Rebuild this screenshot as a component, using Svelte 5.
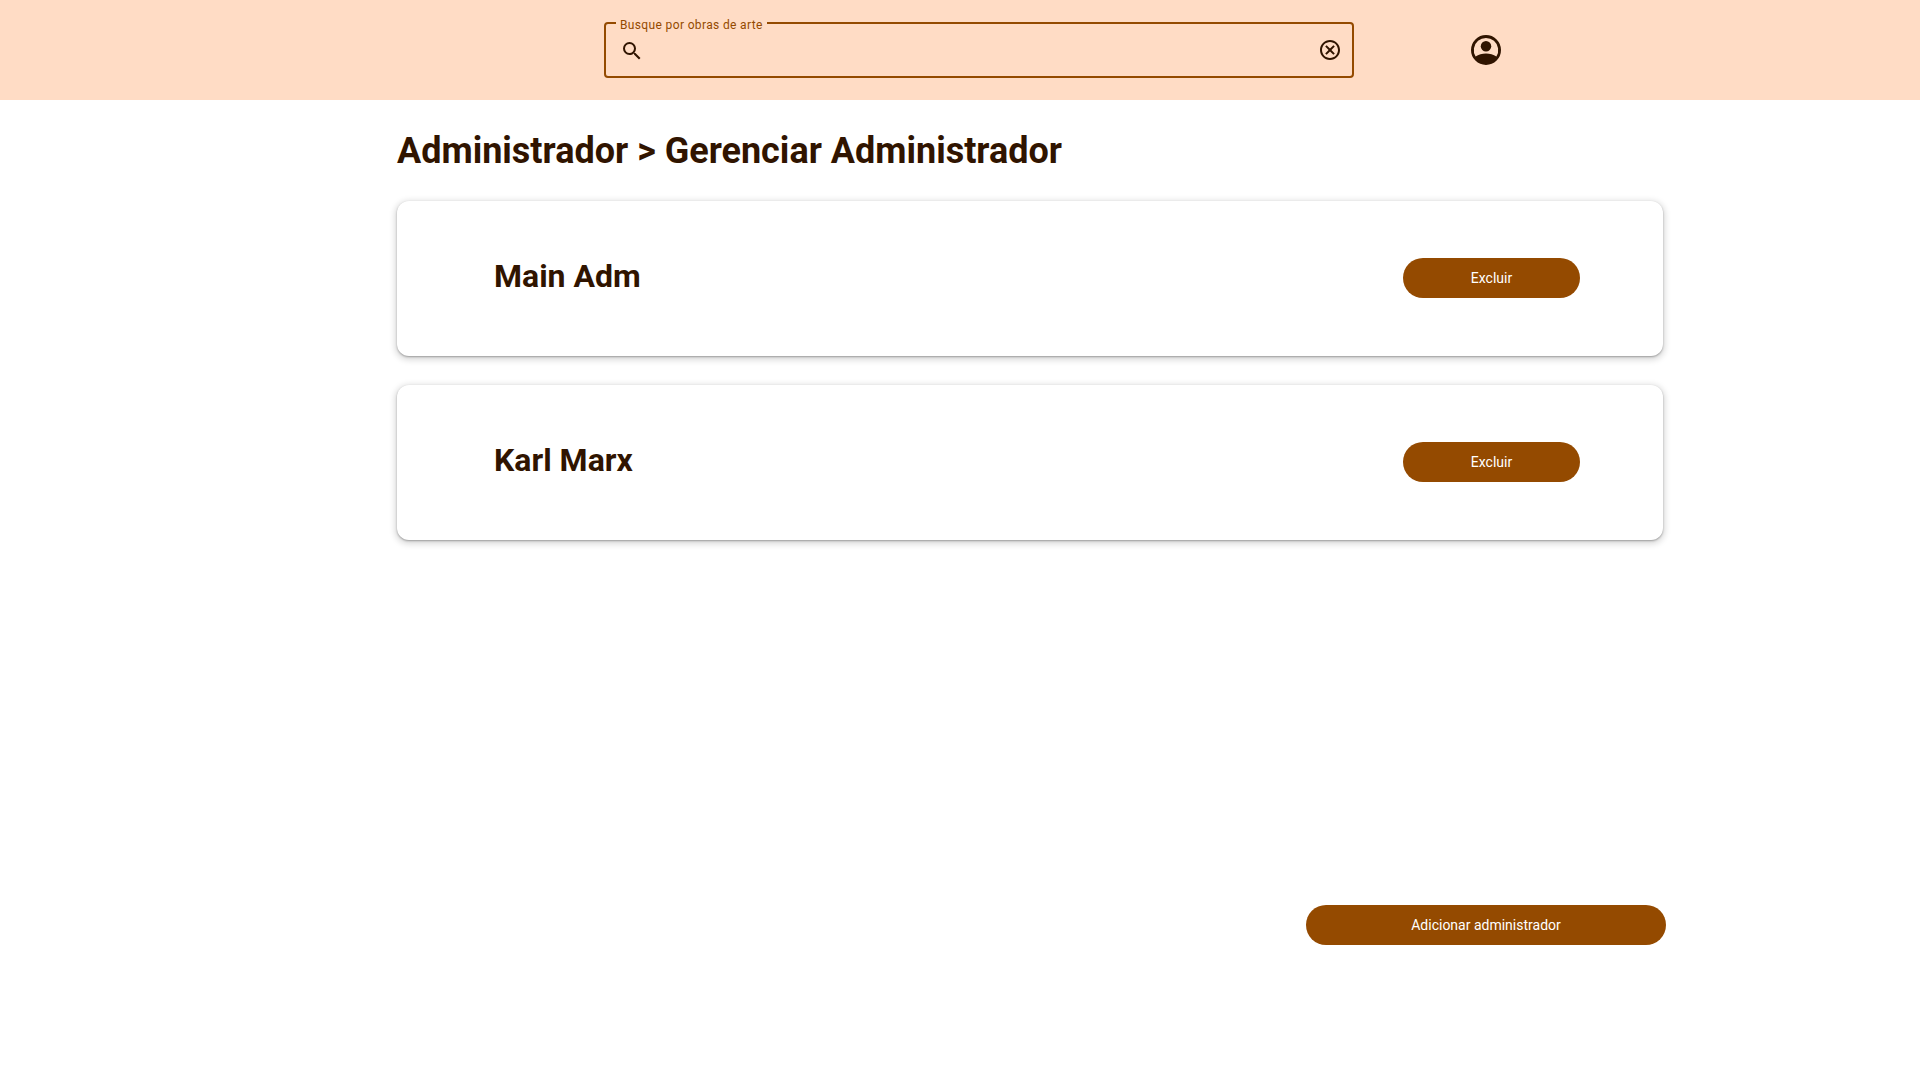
<script>
  let query = $state('');
  let admins = $state([
    { id: 1, name: 'Main Adm' },
    { id: 2, name: 'Karl Marx' }
  ]);

  function remove(id) {
    admins = admins.filter((admin) => admin.id !== id);
  }
</script>

<div class="page">
  <header class="topbar">
    <form class="search" role="search" onsubmit={(e) => e.preventDefault()}>
      <fieldset class="field">
        <legend><label for="query">Busque por obras de arte</label></legend>
        <div class="row">
          <svg class="icon" viewBox="0 -1 24 24" aria-hidden="true">
            <path d="M15.5 14h-.79l-.28-.27A6.47 6.47 0 0 0 16 9.5 6.5 6.5 0 1 0 9.5 16c1.61 0 3.09-.59 4.23-1.57l.27.28v.79l5 4.99L20.49 19l-4.99-5zm-6 0C7.01 14 5 11.99 5 9.5S7.01 5 9.5 5 14 7.01 14 9.5 11.99 14 9.5 14z" />
          </svg>
          <input id="query" type="text" bind:value={query} />
          <button class="plain" type="button" aria-label="Limpar busca" onclick={() => (query = '')}>
            <svg class="icon" viewBox="0 0 24 24" aria-hidden="true">
              <path d="M15.4 7.2 12 10.59 8.6 7.2 7.2 8.6 10.59 12 7.2 15.4 8.6 16.8 12 13.41 15.4 16.8 16.8 15.4 13.41 12 16.8 8.6zM12 2C6.47 2 2 6.47 2 12s4.47 10 10 10 10-4.47 10-10S17.53 2 12 2zm0 18c-4.41 0-8-3.59-8-8s3.59-8 8-8 8 3.59 8 8-3.59 8-8 8z" />
            </svg>
          </button>
        </div>
      </fieldset>
    </form>
    <button class="plain" type="button" aria-label="Minha conta">
      <svg class="account" viewBox="0 0 36 36" aria-hidden="true">
        <path fill-rule="evenodd" d="M18 3a15 15 0 1 0 0 30 15 15 0 0 0 0-30zM7.6 24.5A12.2 12.2 0 1 1 28.4 24.5C25.5 22.6 21.8 21.6 18 21.6S10.5 22.6 7.6 24.5z" />
        <circle cx="18" cy="14.2" r="5.25" />
      </svg>
    </button>
  </header>

  <main>
    <h1>Administrador &gt; Gerenciar Administrador</h1>
    <ul class="cards">
      {#each admins as admin (admin.id)}
        <li class="card">
          <h2>{admin.name}</h2>
          <button class="pill" type="button" onclick={() => remove(admin.id)}>Excluir</button>
        </li>
      {/each}
    </ul>
    <div class="actions">
      <button class="pill wide" type="button">Adicionar administrador</button>
    </div>
  </main>
</div>

<style>
  :global(body) {
    margin: 0;
    background: #fff;
  }

  .page {
    min-height: 100vh;
    display: flex;
    flex-direction: column;
    font-family: Roboto, 'Liberation Sans', sans-serif;
    color: #301400;
  }

  .topbar {
    box-sizing: border-box;
    min-height: 100px;
    padding: 0 416px 0 604px;
    display: flex;
    align-items: center;
    justify-content: space-between;
    gap: 114px;
    background: #ffdcc5;
  }

  .search {
    flex: 1;
    min-width: 0;
    /* The label rises above the outline, which is what gets centred. */
    margin-top: -8px;
  }

  .field {
    margin: 0;
    padding: 0 10px;
    min-width: 0;
    border: 2px solid #944a00;
    border-radius: 4px;
  }

  legend {
    padding: 4px 4px 0;
    font-size: 12px;
    line-height: 14px;
    letter-spacing: 0.03em;
    color: #944a00;
  }

  legend label {
    display: block;
  }

  .row {
    display: flex;
    align-items: center;
    gap: 12px;
    height: 36px;
    padding: 0 0 8px 4px;
  }

  input {
    flex: 1;
    min-width: 0;
    height: 24px;
    padding: 0;
    border: 0;
    outline: 0;
    background: transparent;
    font: inherit;
    font-size: 16px;
    color: #301400;
  }

  .plain {
    display: flex;
    padding: 0;
    border: 0;
    background: none;
    color: #301400;
    cursor: pointer;
  }

  .icon {
    width: 24px;
    height: 24px;
    fill: #301400;
  }

  .account {
    width: 36px;
    height: 36px;
    fill: #301400;
  }

  main {
    flex: 1;
    display: flex;
    flex-direction: column;
    padding: 29px 257px 135px 397px;
  }

  h1 {
    margin: 0;
    font-size: 36px;
    font-weight: 700;
    line-height: 44px;
  }

  .cards {
    display: flex;
    flex-direction: column;
    gap: 29px;
    margin: 28px 0 0;
    padding: 0;
    list-style: none;
  }

  .card {
    box-sizing: border-box;
    min-height: 155px;
    padding: 0 83px 1px 97px;
    display: flex;
    align-items: center;
    justify-content: space-between;
    border-radius: 12px;
    background: #fff;
    box-shadow:
      0 1px 2px rgba(0, 0, 0, 0.3),
      0 2px 6px 2px rgba(0, 0, 0, 0.15);
  }

  h2 {
    margin: 0;
    padding-bottom: 4px;
    font-size: 32px;
    font-weight: 700;
    line-height: 40px;
  }

  .pill {
    min-width: 177px;
    height: 40px;
    padding: 0 24px;
    border: 0;
    border-radius: 20px;
    background: #944a00;
    color: #fff;
    font-family: inherit;
    font-size: 14px;
    line-height: 20px;
    cursor: pointer;
  }

  .actions {
    display: flex;
    justify-content: flex-end;
    margin-top: auto;
    margin-right: -3px;
  }

  .wide {
    min-width: 360px;
  }
</style>
